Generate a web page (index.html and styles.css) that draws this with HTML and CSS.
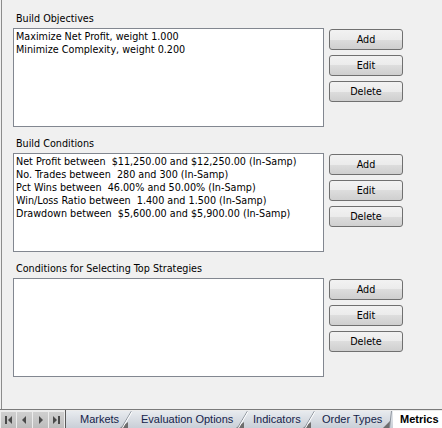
FILE: index.html
```html
<!DOCTYPE html>
<html>
<head>
<meta charset="utf-8">
<link rel="stylesheet" href="styles.css">
</head>
<body>
<div class="window">
  <div class="content">
    <section class="group">
      <div class="group-label">Build Objectives</div>
      <div class="group-body">
        <div class="listbox">
          <div class="item">Maximize Net Profit, weight 1.000</div>
          <div class="item">Minimize Complexity, weight 0.200</div>
        </div>
        <div class="buttons">
          <button class="btn">Add</button>
          <button class="btn">Edit</button>
          <button class="btn">Delete</button>
        </div>
      </div>
    </section>
    <section class="group">
      <div class="group-label">Build Conditions</div>
      <div class="group-body">
        <div class="listbox">
          <div class="item">Net Profit between  $11,250.00 and $12,250.00 (In-Samp)</div>
          <div class="item">No. Trades between  280 and 300 (In-Samp)</div>
          <div class="item">Pct Wins between  46.00% and 50.00% (In-Samp)</div>
          <div class="item">Win/Loss Ratio between  1.400 and 1.500 (In-Samp)</div>
          <div class="item">Drawdown between  $5,600.00 and $5,900.00 (In-Samp)</div>
        </div>
        <div class="buttons">
          <button class="btn">Add</button>
          <button class="btn">Edit</button>
          <button class="btn">Delete</button>
        </div>
      </div>
    </section>
    <section class="group">
      <div class="group-label">Conditions for Selecting Top Strategies</div>
      <div class="group-body">
        <div class="listbox"></div>
        <div class="buttons">
          <button class="btn">Add</button>
          <button class="btn">Edit</button>
          <button class="btn">Delete</button>
        </div>
      </div>
    </section>
  </div>
  <div class="tabbar">
    <div class="nav">
      <span class="nav-btn"><svg width="15" height="16" viewBox="0 0 15 16"><rect x="4" y="4" width="2" height="8" fill="#4a4a4a"/><path d="M11 4 L7 8 L11 12 Z" fill="#4a4a4a"/></svg></span>
      <span class="nav-btn"><svg width="15" height="16" viewBox="0 0 15 16"><path d="M9 4 L5 8 L9 12 Z" fill="#4a4a4a"/></svg></span>
      <span class="nav-btn"><svg width="15" height="16" viewBox="0 0 15 16"><path d="M6 4 L10 8 L6 12 Z" fill="#4a4a4a"/></svg></span>
      <span class="nav-btn"><svg width="15" height="16" viewBox="0 0 15 16"><path d="M4 4 L8 8 L4 12 Z" fill="#4a4a4a"/><rect x="9" y="4" width="2" height="8" fill="#4a4a4a"/></svg></span>
    </div>
    <div class="tabs">
      <div class="tab tab-markets">Markets</div>
      <svg class="sep" width="12" height="17" viewBox="0 0 12 17"><path d="M0 17 L8 17 L8 11 Z" fill="#6e6e6e"/><line x1="1.5" y1="17" x2="11.5" y2="0" stroke="#8c939c" stroke-width="1"/><line x1="2.5" y1="17" x2="12.5" y2="0" stroke="#ffffff" stroke-width="1"/></svg>
      <div class="tab tab-eval">Evaluation Options</div>
      <svg class="sep" width="12" height="17" viewBox="0 0 12 17"><path d="M0 17 L8 17 L8 11 Z" fill="#6e6e6e"/><line x1="1.5" y1="17" x2="11.5" y2="0" stroke="#8c939c" stroke-width="1"/><line x1="2.5" y1="17" x2="12.5" y2="0" stroke="#ffffff" stroke-width="1"/></svg>
      <div class="tab tab-ind">Indicators</div>
      <svg class="sep" width="12" height="17" viewBox="0 0 12 17"><path d="M0 17 L8 17 L8 11 Z" fill="#6e6e6e"/><line x1="1.5" y1="17" x2="11.5" y2="0" stroke="#8c939c" stroke-width="1"/><line x1="2.5" y1="17" x2="12.5" y2="0" stroke="#ffffff" stroke-width="1"/></svg>
      <div class="tab tab-order">Order Types</div>
      <svg class="sep sep-active" width="10" height="17" viewBox="0 0 10 17"><path d="M0 17 L7 17 L7 10 Z" fill="#6e6e6e"/><line x1="6.5" y1="17" x2="8.5" y2="0" stroke="#8c939c" stroke-width="1"/></svg>
      <div class="tab tab-active">Metrics</div>
    </div>
  </div>
</div>
</body>
</html>
```

FILE: styles.css
```css
html, body {
  margin: 0;
  padding: 0;
}
body {
  background: #f0f0f0;
  font-family: "DejaVu Sans Condensed", "Liberation Sans", Arial, sans-serif;
  font-size: 10.7px;
  color: #000;
}
.window {
  width: 442px;
  height: 428px;
  display: flex;
  flex-direction: column;
  overflow: hidden;
}
.content {
  flex: none;
  height: 409px;
  box-sizing: border-box;
  margin-left: 1px;
  border-left: 1px solid #8c8c8c;
  padding: 12px 0 0 11px;
  display: flex;
  flex-direction: column;
  gap: 10px;
}
.group-label {
  line-height: 13px;
  margin: 0 0 3px 3px;
  white-space: nowrap;
}
.group-body {
  display: flex;
  gap: 5px;
}
.listbox {
  width: 311px;
  height: 99px;
  box-sizing: border-box;
  border: 1px solid #828790;
  background: #fff;
  padding: 1px 2px;
}
.item {
  line-height: 13px;
  white-space: pre;
}
.buttons {
  display: flex;
  flex-direction: column;
  gap: 5px;
  padding-top: 1px;
}
.btn {
  width: 74px;
  height: 21px;
  box-sizing: border-box;
  border: 1px solid #707070;
  border-radius: 3px;
  background: linear-gradient(#f2f2f2 0%, #ebebeb 50%, #dddddd 50%, #cfcfcf 100%);
  font: inherit;
  color: #000;
  padding: 0;
}
.tabbar {
  flex: none;
  height: 19px;
  box-sizing: border-box;
  border-top: 1px solid #7a7a7a;
  display: flex;
  background: #ececec;
}
.nav {
  width: 66px;
  flex: none;
  display: flex;
  gap: 1px;
  padding: 2px 0 0 1px;
  box-sizing: border-box;
  border-right: 1px solid #5a5a5a;
}
.nav-btn {
  width: 15px;
  height: 16px;
  background: linear-gradient(#cfcfcf, #bdbdbd);
  display: block;
}
.nav-btn svg {
  display: block;
}
.tabs {
  flex: 1;
  display: flex;
  margin-top: 1px;
  background: linear-gradient(#e8ebef, #c9cfd7);
  font-family: "Liberation Sans", Arial, sans-serif;
  font-size: 11px;
  color: #14234a;
  overflow: hidden;
}
.tab {
  flex: none;
  line-height: 17px;
  white-space: nowrap;
  box-sizing: border-box;
}
.sep {
  flex: none;
  display: block;
}
.tab-markets { width: 54px; padding-left: 14px; }
.tab-eval { width: 104px; padding-left: 9px; }
.tab-ind { width: 55px; padding-left: 5px; }
.tab-order { width: 68px; padding-left: 7px; }
.tab-active {
  flex: 1;
  padding-left: 7px;
  background: #fff;
  font-weight: bold;
  color: #000;
}
```
